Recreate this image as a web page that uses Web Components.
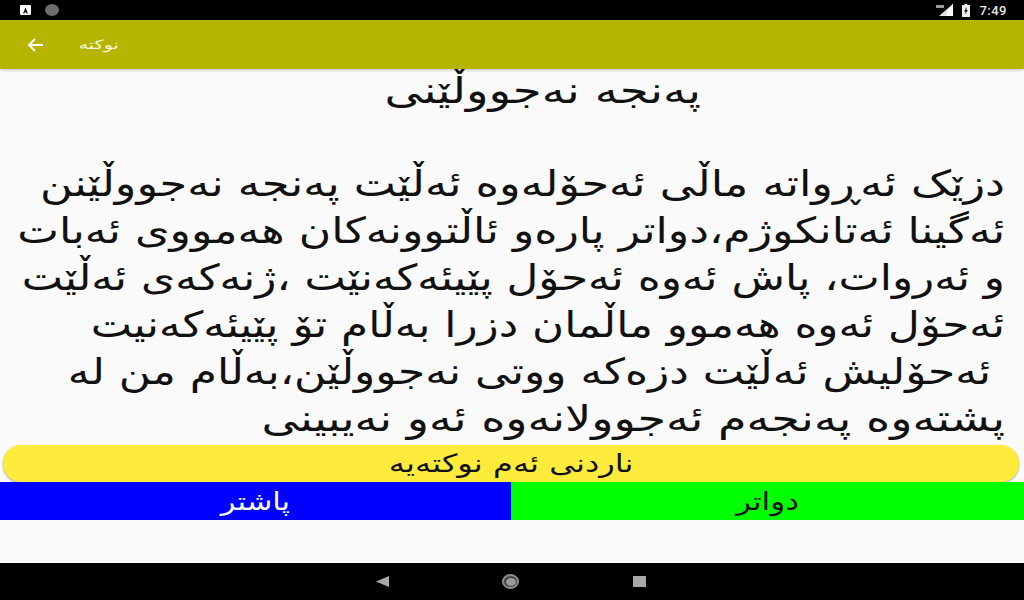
<!DOCTYPE html>
<html lang="ckb">
<head>
<meta charset="utf-8">
<title>نوکتە</title>
<style>
    html, body { margin: 0; height: 100%; }
    body { width: 1024px; height: 600px; overflow: hidden; background: #fafafa; font-family: "DejaVu Sans", sans-serif; }
    joke-app { height: 600px; }
</style>
</head>
<body>
<joke-app></joke-app>

<template id="status-tpl">
<style>
    :host { display: flex; align-items: center; height: 20px; background: #000; padding: 0 17px 0 20px; }
    .a { width: 11px; height: 10px; background: #fff; border-radius: 1px; display: flex; align-items: center; justify-content: center; margin-right: 14px; }
    .dot { width: 14px; height: 12px; border-radius: 50%; background: #6e6e6e; }
    .grow { flex: 1; }
    .time { color: #e6e6e6; font: 500 13px Roboto, sans-serif; letter-spacing: .5px; margin-left: 9px; }
    svg { display: block; }
</style>
<span class="a"><svg width="7" height="7" viewBox="0 0 7 7"><path d="M1 6.5 3.5 .5 6 6.5H4.7L4.2 5.2H2.8L2.3 6.5Z" fill="#111"/></svg></span>
<span class="dot"></span>
<span class="grow"></span>
<svg width="18" height="12" viewBox="0 0 18 12"><path d="M17 0V12H3Z" fill="#e4e4e4"/><path d="M11 6V12H17V0Z" fill="#fff"/><path d="M0 1h8v3H0z" fill="#9a9a9a"/></svg>
<svg width="8" height="13" viewBox="0 0 9 13" preserveAspectRatio="none" style="margin-left:8px"><path d="M3 0h3v1h3v12H0V1h3Z" fill="#eee"/><path d="M5 3 2.5 7.5H4L3.6 10.5 6.5 6H5Z" fill="#111"/></svg>
<span class="time">7:49</span>
</template>

<template id="bar-tpl">
<style>
    :host { display: flex; align-items: center; height: 49px; background: #b5b500; color: #f4f4d8; padding-left: 26px; box-shadow: 0 1px 3px rgba(0,0,0,.25); position: relative; z-index: 1; }
    .title { margin-left: 41px; font-size: 13px; transform: scaleX(1.46); }
    svg { display: block; }
</style>
<svg width="18" height="16" viewBox="0 0 18 16"><path d="M17 8H3M9 2 3 8l6 6" fill="none" stroke="#fff" stroke-width="2"/></svg>
<span class="title" dir="rtl"><slot></slot></span>
</template>

<template id="text-tpl">
<style>
    :host { display: block; height: 376px; overflow: hidden; color: #111; direction: rtl; }
    .head { text-align: center; font-size: 36px; line-height: 43px; height: 42px; padding-left: 61px; }
    .head span { display: inline-block; transform: scaleX(1.3); }
    .body { padding-top: 49px; }
    ::slotted(div) { height: 47px; line-height: 47px; font-size: 36px; white-space: pre; margin-right: 19px; transform: scaleX(var(--sx)); transform-origin: right center; }
</style>
<div class="head"><span><slot name="head"></slot></span></div>
<div class="body"><slot></slot></div>
</template>

<template id="btn-tpl">
<style>
    :host { display: flex; align-items: center; justify-content: center; height: 38px; font-size: 25px; direction: rtl; }
    :host([kind="send"]) { height: 37px; margin: 0 5px 0 3px; background: #ffeb3b; color: #111; border-radius: 18px; box-shadow: 0 1px 2px rgba(0,0,0,.35); }
    :host([kind="prev"]) { flex: 0 0 511px; background: #0000ff; color: #fff; }
    :host([kind="next"]) { flex: 1; background: #00ff00; color: #111; }
    span { display: inline-block; transform: scaleX(var(--sx, 1.25)); }
</style>
<span><slot></slot></span>
</template>

<template id="nav-tpl">
<style>
    :host { display: flex; align-items: center; justify-content: center; height: 37px; background: #000; gap: 113.5px; padding-right: 3px; }
    .home { width: 17px; height: 15px; border-radius: 50%; background: #444; border: 2px solid #8e8e8e; box-sizing: border-box; display: flex; align-items: center; justify-content: center; }
    .home i { width: 10px; height: 8px; border-radius: 50%; background: #9a9a9a; }
    .sq { width: 13px; height: 11px; background: #a8a8a8; }
    svg { display: block; }
</style>
<svg width="13" height="11" viewBox="0 0 13 11"><path d="M13 0V11L0 5.5Z" fill="#a8a8a8"/></svg>
<span class="home"><i></i></span>
<span class="sq"></span>
</template>

<script>
function shadow(el, id) {
    el.attachShadow({ mode: "open" });
    el.shadowRoot.appendChild(document.getElementById(id).content.cloneNode(true));
}

function simple(tag, id) {
    customElements.define(tag, class extends HTMLElement {
        constructor() {
            super();
            shadow(this, id);
        }
    });
}

simple("status-bar", "status-tpl");
simple("app-bar", "bar-tpl");
simple("joke-text", "text-tpl");
simple("joke-button", "btn-tpl");
simple("nav-bar", "nav-tpl");

// the reference is stretched sideways, each line by a slightly different amount
const LINES = [
    ["دزێک ئەڕواتە ماڵی ئەحۆلەوە ئەڵێت پەنجە نەجووڵێنن", 1.243],
    ["ئەگینا ئەتانکوژم،دواتر پارەو ئاڵتوونەکان هەمووی ئەبات", 1.23],
    ["و ئەروات، پاش ئەوە ئەحۆل پێیئەکەنێت ،ژنەکەی ئەڵێت", 1.217],
    ["ئەحۆل ئەوە هەموو ماڵمان دزرا بەڵام تۆ پێیئەکەنیت", 1.215],
    [" ئەحۆلیش ئەڵێت دزەکە ووتی نەجووڵێن،بەڵام من لە", 1.222],
    ["پشتەوە پەنجەم ئەجوولانەوە ئەو نەیبینی", 1.28],
];

customElements.define("joke-app", class extends HTMLElement {
    constructor() {
        super();
        this.attachShadow({ mode: "open" });
        this.shadowRoot.innerHTML = `
<style>
    :host { display: flex; flex-direction: column; }
    .pair { display: flex; }
    .rest { flex: 1; background: #fafafa; }
</style>
<status-bar></status-bar>
<app-bar>نوکتە</app-bar>
<joke-text>
    <span slot="head">پەنجە نەجووڵێنی</span>
    ${LINES.map(([l, sx]) => '<div style="--sx:' + sx + '">' + l + "</div>").join("")}
</joke-text>
<joke-button kind="send" style="--sx:1.285">ناردنی ئەم نوکتەیە</joke-button>
<div class="pair">
    <joke-button kind="prev" style="--sx:1.22">پاشتر</joke-button>
    <joke-button kind="next" style="--sx:1.24">دواتر</joke-button>
</div>
<div class="rest"></div>
<nav-bar></nav-bar>`;
    }
});
</script>
</body>
</html>
